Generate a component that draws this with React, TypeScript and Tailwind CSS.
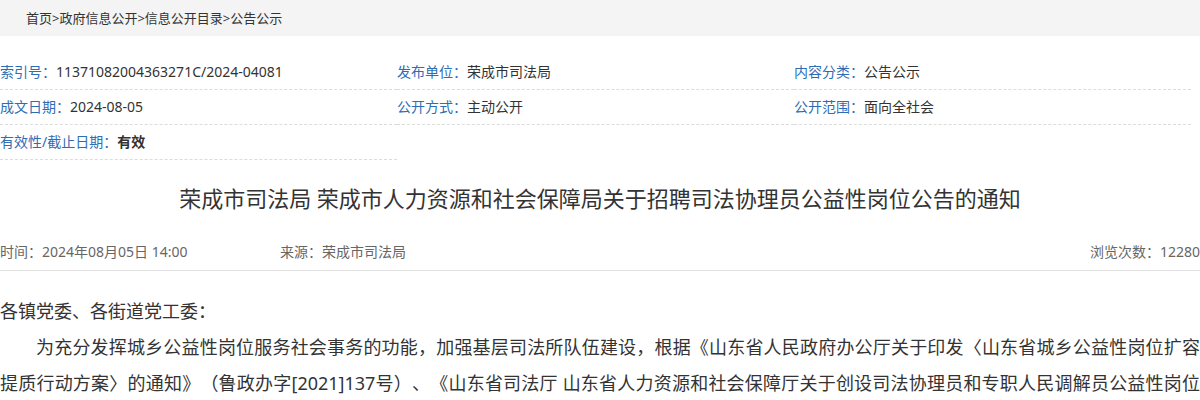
export default function App() {
  const font = { fontFamily: '"Noto Sans", "Noto Sans CJK SC", sans-serif' }

  // 信息公开元数据
  const meta = [
    { label: '索引号：', value: '11371082004363271C/2024-04081' },
    { label: '发布单位：', value: '荣成市司法局' },
    { label: '内容分类：', value: '公告公示' },
    { label: '成文日期：', value: '2024-08-05' },
    { label: '公开方式：', value: '主动公开' },
    { label: '公开范围：', value: '面向全社会' },
  ]

  return (
    <div className="w-[1200px] bg-white text-[#333] [text-spacing-trim:space-all]" style={font}>
      <div className="h-[36px] bg-[#f4f4f4] pl-[26px] text-[13px] leading-[36px] text-[#333]">
        首页&gt;政府信息公开&gt;信息公开目录&gt;公告公示
      </div>

      <ul className="mt-[19px] flex w-[1191px] flex-wrap">
        {meta.map((m) => (
          <li
            key={m.label}
            className="h-[35px] w-[397px] border-b border-dashed border-[#dcdcdc] text-[14px] leading-[34px]"
          >
            <span className="text-[#2d6db5]">{m.label}</span>
            <span>{m.value}</span>
          </li>
        ))}
        <li className="h-[35px] w-[397px] border-b border-dashed border-[#dcdcdc] text-[14px] leading-[34px]">
          <span className="text-[#2d6db5]">有效性/截止日期：</span>
          <span className="font-bold">有效</span>
        </li>
      </ul>

      <h1 className="mt-[22px] text-center text-[22px] leading-[32px] font-normal text-[#333]">
        荣成市司法局 荣成市人力资源和社会保障局关于招聘司法协理员公益性岗位公告的通知
      </h1>

      <div className="mt-[20px] flex h-[37px] items-start border-b border-[#e0e0e0] text-[14px] leading-[36px] text-[#666]">
        <span className="inline-block w-[280px]">时间：2024年08月05日 14:00</span>
        <span>来源：荣成市司法局</span>
        <span className="ml-auto">浏览次数：12280</span>
      </div>

      <div className="pt-[22px] text-justify text-[18px] leading-[36px] text-[#333]">
        <p>各镇党委、各街道党工委：</p>
        <p className="indent-[36px]">
          为充分发挥城乡公益性岗位服务社会事务的功能，加强基层司法所队伍建设，根据《山东省人民政府办公厅关于印发〈山东省城乡公益性岗位扩容提质行动方案〉的通知》（鲁政办字[2021]137号）、《山东省司法厅 山东省人力资源和社会保障厅关于创设司法协理员和专职人民调解员公益性岗位的通知》（鲁司〔2021〕12号）等文件精神，结合我市实际，现将招聘司法协理员公益性岗位有关事项公告如下：
        </p>
      </div>
    </div>
  )
}
